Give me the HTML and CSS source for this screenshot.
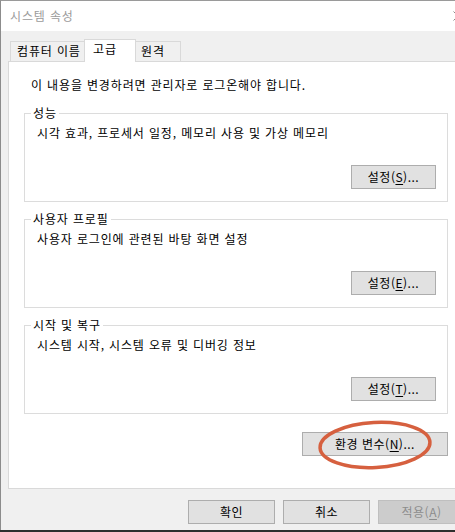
FILE: index.html
```html
<!DOCTYPE html>
<html lang="ko">
<head>
    <meta charset="UTF-8">
    <meta name="viewport" content="width=device-width, initial-scale=1.0">
    <title>시스템 속성</title>

    <link rel="stylesheet" href="styles.css">
</head>
<body>
    <div class="dialog">
        <div class="titlebar">
            <span class="title">시스템 속성</span>
            <svg class="close" width="10" height="10" viewBox="0 0 10 10">
                <path d="M0.5 0.5 L9.5 9.5 M9.5 0.5 L0.5 9.5" stroke="#8a8a8a" stroke-width="1" fill="none"/>
            </svg>
        </div>

        <div class="content">
            <div class="tabs">
                <div class="tab tab-name">컴퓨터 이름</div>
                <div class="tab active">고급</div>
                <div class="tab tab-remote">원격</div>
            </div>

            <div class="panel">
                <p class="notice">이 내용을 변경하려면 관리자로 로그온해야 합니다.</p>

                <fieldset class="group">
                    <legend>성능</legend>
                    <p>시각 효과, 프로세서 일정, 메모리 사용 및 가상 메모리</p>
                    <div class="group-actions">
                        <button class="btn">설정(<u>S</u>)...</button>
                    </div>
                </fieldset>

                <fieldset class="group">
                    <legend>사용자 프로필</legend>
                    <p>사용자 로그인에 관련된 바탕 화면 설정</p>
                    <div class="group-actions">
                        <button class="btn">설정(<u>E</u>)...</button>
                    </div>
                </fieldset>

                <fieldset class="group">
                    <legend>시작 및 복구</legend>
                    <p>시스템 시작, 시스템 오류 및 디버깅 정보</p>
                    <div class="group-actions">
                        <button class="btn">설정(<u>T</u>)...</button>
                    </div>
                </fieldset>

                <div class="env-row">
                    <button class="btn btn-env">환경 변수(<u>N</u>)...</button>
                    <svg class="mark" width="116" height="52" viewBox="0 0 116 52">
                        <ellipse cx="58" cy="26" rx="55" ry="22.5" transform="rotate(-3 58 26)" fill="none" stroke="#d6603f" stroke-width="3.5"/>
                    </svg>
                </div>
            </div>

            <div class="footer">
                <button class="btn btn-footer">확인</button>
                <button class="btn btn-footer">취소</button>
                <button class="btn btn-footer" disabled>적용(<u>A</u>)</button>
            </div>
        </div>
    </div>
</body>
</html>
```

FILE: styles.css
```css
body{
    margin: 0;
    background-color: #2e2e2e;
    overflow: hidden;
    font-family: "Noto Sans CJK KR", "Noto Sans", sans-serif;
    font-size: 12px;
    letter-spacing: 0.85px;
    color: #000;
}

.dialog{
    width: 471px;
    height: 529px;
    background-color: #f0f0f0;
    border-top: 1px solid #9a9a9a;
    border-left: 1px solid #8c8c8c;
}

.titlebar{
    height: 30px;
    background-color: #fff;
    display: flex;
    align-items: center;
    justify-content: space-between;
}

.title{
    padding-left: 9px;
    color: #9b9b9b;
    line-height: 30px;
}

.close{
    margin-right: 9px;
}

.content{
    padding: 0 7px 0 7px;
}

.tabs{
    height: 30px;
    padding-left: 2px;
    display: flex;
    align-items: flex-end;
}

.tab{
    height: 20px;
    line-height: 18px;
    box-sizing: border-box;
    border: 1px solid #d9d9d9;
    border-bottom: none;
    background-color: #f0f0f0;
    white-space: nowrap;
}

.tab-name{
    width: 75px;
    padding-left: 6px;
}

.tab.active{
    position: relative;
    z-index: 1;
    width: 52px;
    height: 23px;
    margin: 0 -1px -1px -1px;
    padding-left: 8px;
    line-height: 17px;
    background-color: #fff;
}

.tab-remote{
    width: 46px;
    padding-left: 5px;
}

.panel{
    height: 428px;
    box-sizing: border-box;
    background-color: #fff;
    border: 1px solid #d9d9d9;
    padding: 0 16px 0 15px;
}

.notice{
    margin: 15px 0 0 7px;
    line-height: 16px;
}

.group{
    margin: 12px 0 0 0;
    padding: 4px 11px 12px 12px;
    border: 1px solid #dcdcdc;
    min-inline-size: 0;
}

.group + .group{
    margin-top: 9px;
}

.group legend{
    margin-left: -6px;
    padding: 0 2px;
    line-height: 16px;
}

.group p{
    margin: 0;
    line-height: 16px;
}

.group-actions{
    margin-top: 24px;
    display: flex;
    justify-content: flex-end;
}

.btn{
    height: 24px;
    padding: 0;
    font-family: inherit;
    font-size: 12px;
    letter-spacing: 0.5px;
    line-height: 22px;
    color: #000;
    background-color: #e1e1e1;
    border: 1px solid #adadad;
}

.group-actions .btn{
    width: 85px;
}

.btn u{
    text-underline-offset: 2px;
}

.env-row{
    position: relative;
    margin-top: 18px;
    display: flex;
    justify-content: flex-end;
}

.btn-env{
    width: 146px;
}

.mark{
    position: absolute;
    right: 15px;
    top: -13px;
}

.footer{
    margin-top: 11px;
    display: flex;
    justify-content: flex-end;
    gap: 8px;
}

.btn-footer{
    width: 87px;
    height: 24px;
}

.btn-footer:disabled{
    color: #8c8c8c;
    background-color: #cccccc;
    border-color: #bfbfbf;
}
```
